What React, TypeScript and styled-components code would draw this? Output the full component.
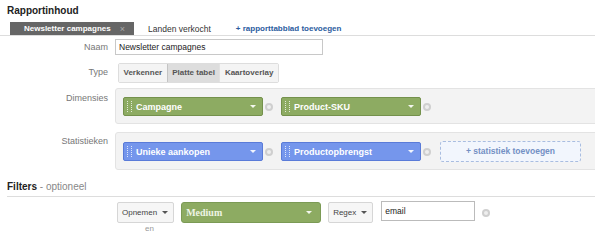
import React from 'react';
import styled, { createGlobalStyle } from 'styled-components';

const GlobalStyle = createGlobalStyle`
  body {
    margin: 0;
    background: #fff;
    font-family: 'Liberation Sans', Arial, sans-serif;
    font-size: 9px;
    color: #333;
    overflow: hidden;
  }
`;

const Page = styled.div`
  width: 595px;
  height: 234px;
  overflow: hidden;
  padding-top: 5px;
  box-sizing: border-box;
`;

const SectionTitle = styled.div`
  padding-left: 7px;
  font-weight: bold;
  font-size: 10px;
  line-height: 12px;
  color: #222;
`;

const Subtle = styled.span`
  font-weight: normal;
  color: #888;
`;

const TabBar = styled.div`
  display: flex;
  align-items: stretch;
  height: 13px;
  margin-top: 5px;
  padding-left: 10px;
  border-bottom: 1px solid #ddd;
`;

const Tab = styled.div<{ $active?: boolean; $link?: boolean }>`
  display: flex;
  align-items: center;
  gap: 9px;
  padding-left: 14px;
  width: ${({ $active }) => ($active ? '124px' : 'auto')};
  margin-right: ${({ $active, $link }) => ($active || $link ? 0 : '11px')};
  box-sizing: border-box;
  background: ${({ $active }) => ($active ? '#666' : 'transparent')};
  color: ${({ $active, $link }) => ($active ? '#fff' : $link ? '#2b5c9e' : '#333')};
  font-weight: ${({ $active, $link }) => ($active || $link ? 'bold' : 'normal')};
  font-size: ${({ $active, $link }) => ($active || $link ? '8px' : '8.5px')};
  white-space: nowrap;
`;

const TabClose = styled.span`
  color: #aaa;
  font-weight: normal;
  font-size: 9px;
`;

const Row = styled.div<{ $top: number }>`
  display: grid;
  grid-template-columns: 108px 1fr;
  column-gap: 7px;
  margin-top: ${({ $top }) => $top}px;
  align-items: start;
`;

const Label = styled.div<{ $pad?: number }>`
  text-align: right;
  color: #777;
  font-size: 9px;
  line-height: 12px;
  padding-top: ${({ $pad }) => $pad ?? 2}px;
`;

const TextInput = styled.div<{ $width: number }>`
  width: ${({ $width }) => $width}px;
  height: 16px;
  box-sizing: border-box;
  border: 1px solid #c8c8c8;
  background: #fff;
  padding: 0 3px;
  line-height: 14px;
  font-size: 8.5px;
  color: #222;
`;

const ButtonGroup = styled.div`
  display: flex;
  margin-left: 3px;
  border: 1px solid #ddd;
  border-radius: 2px;
  width: fit-content;
`;

const GroupButton = styled.div<{ $active?: boolean }>`
  height: 18px;
  line-height: 18px;
  padding: 0 4.5px;
  font-size: 8px;
  font-weight: bold;
  color: #555;
  background: ${({ $active }) => ($active ? '#ddd' : '#f4f4f4')};
  border-left: 1px solid ${({ $active }) => ($active ? '#c4c4c4' : '#e2e2e2')};
  &:first-child {
    border-left: none;
  }
`;

const Panel = styled.div`
  display: flex;
  align-items: center;
  margin-right: -12px;
  padding: 8px 7px 7px;
  background: #f3f3f3;
  border: 1px solid #e3e3e3;
  border-radius: 3px;
`;

const ChipWrap = styled.div`
  display: flex;
  align-items: center;
  gap: 2px;
  margin-right: 8px;
`;

const Chip = styled.div<{ $kind: 'dim' | 'metric' }>`
  display: flex;
  align-items: center;
  width: 140px;
  height: 19px;
  box-sizing: border-box;
  padding: 0 6px 0 3px;
  border-radius: 2px;
  background: ${({ $kind }) => ($kind === 'dim' ? '#8dab62' : '#7596ec')};
  border: 1px solid ${({ $kind }) => ($kind === 'dim' ? '#74914c' : '#5a7bd8')};
  color: #fff;
  font-weight: bold;
  font-size: 9px;
`;

const Grip = styled.span`
  width: 3px;
  height: 11px;
  margin-right: 4px;
  border-left: 1px dotted rgba(255, 255, 255, 0.75);
  border-right: 1px dotted rgba(255, 255, 255, 0.75);
`;

const ChipText = styled.span`
  flex: 1;
  white-space: nowrap;
`;

const Caret = styled.span`
  width: 0;
  height: 0;
  border-left: 3px solid transparent;
  border-right: 3px solid transparent;
  border-top: 3px solid rgba(255, 255, 255, 0.9);
`;

const Remove = styled.span`
  display: inline-block;
  width: 8px;
  height: 8px;
  border-radius: 50%;
  background: #cfcfcf;
  position: relative;
  &::after {
    content: '';
    position: absolute;
    left: 2px;
    top: 2px;
    width: 4px;
    height: 4px;
    border-radius: 50%;
    background: #eee;
  }
`;

const AddButton = styled.div`
  width: 141px;
  height: 21px;
  box-sizing: border-box;
  margin-left: 1px;
  border: 1px dashed #a9bde0;
  border-radius: 3px;
  background: #f2f6fd;
  color: #7390c4;
  font-size: 8.5px;
  font-weight: bold;
  text-align: center;
  line-height: 19px;
`;

const FilterTitle = styled(SectionTitle)`
  margin-top: 11px;
  padding-bottom: 3px;
  margin-left: 7px;
  padding-left: 0;
  border-bottom: 1px solid #ddd;
`;

const FilterRow = styled.div`
  display: flex;
  align-items: center;
  margin-top: 5px;
  padding-left: 117px;
`;

const Select = styled.div`
  display: flex;
  align-items: center;
  gap: 5px;
  height: 21px;
  box-sizing: border-box;
  padding: 0 5px 0 4px;
  margin-right: 7px;
  border: 1px solid #d6d6d6;
  border-radius: 2px;
  background: #f6f6f6;
  font-size: 8px;
  color: #444;
`;

const DarkCaret = styled(Caret)`
  border-top-color: #555;
`;

const FilterChip = styled.div`
  display: flex;
  align-items: center;
  width: 140px;
  height: 21px;
  box-sizing: border-box;
  padding: 0 8px 0 4px;
  margin-right: 7px;
  border-radius: 3px;
  background: #8dab62;
  border: 1px solid #7b9a55;
  color: #eef4e4;
  font-family: 'Liberation Serif', 'Times New Roman', serif;
  font-weight: bold;
  font-size: 10px;
`;

const FilterInput = styled(TextInput)`
  height: 20px;
  margin-top: -3px;
  margin-left: 1px;
  margin-right: 7px;
  line-height: 18px;
  border-color: #bbb;
`;

const Conjunction = styled.div`
  padding-left: 145px;
  margin-top: 1px;
  font-size: 8px;
  color: #999;
`;

const App: React.FC = () => (
  <Page>
    <GlobalStyle />
    <SectionTitle>Rapportinhoud</SectionTitle>

    <TabBar>
      <Tab $active>
        Newsletter campagnes <TabClose>×</TabClose>
      </Tab>
      <Tab>Landen verkocht</Tab>
      <Tab $link>+ rapporttabblad toevoegen</Tab>
    </TabBar>

    <Row $top={3}>
      <Label $pad={2}>Naam</Label>
      <TextInput $width={208}>Newsletter campagnes</TextInput>
    </Row>

    <Row $top={8}>
      <Label $pad={3}>Type</Label>
      <ButtonGroup>
        <GroupButton>Verkenner</GroupButton>
        <GroupButton $active>Platte tabel</GroupButton>
        <GroupButton>Kaartoverlay</GroupButton>
      </ButtonGroup>
    </Row>

    <Row $top={5}>
      <Label $pad={4}>Dimensies</Label>
      <Panel>
        <ChipWrap>
          <Chip $kind="dim">
            <Grip />
            <ChipText>Campagne</ChipText>
            <Caret />
          </Chip>
          <Remove />
        </ChipWrap>
        <ChipWrap>
          <Chip $kind="dim">
            <Grip />
            <ChipText>Product-SKU</ChipText>
            <Caret />
          </Chip>
          <Remove />
        </ChipWrap>
      </Panel>
    </Row>

    <Row $top={8}>
      <Label $pad={3}>Statistieken</Label>
      <Panel>
        <ChipWrap>
          <Chip $kind="metric">
            <Grip />
            <ChipText>Unieke aankopen</ChipText>
            <Caret />
          </Chip>
          <Remove />
        </ChipWrap>
        <ChipWrap>
          <Chip $kind="metric">
            <Grip />
            <ChipText>Productopbrengst</ChipText>
            <Caret />
          </Chip>
          <Remove />
        </ChipWrap>
        <AddButton>+ statistiek toevoegen</AddButton>
      </Panel>
    </Row>

    <FilterTitle>
      Filters <Subtle>- optioneel</Subtle>
    </FilterTitle>

    <FilterRow>
      <Select>
        Opnemen <DarkCaret />
      </Select>
      <FilterChip>
        <ChipText>Medium</ChipText>
        <Caret />
      </FilterChip>
      <Select>
        Regex <DarkCaret />
      </Select>
      <FilterInput $width={94}>email</FilterInput>
      <Remove />
    </FilterRow>
    <Conjunction>en</Conjunction>
  </Page>
);

export default App;
